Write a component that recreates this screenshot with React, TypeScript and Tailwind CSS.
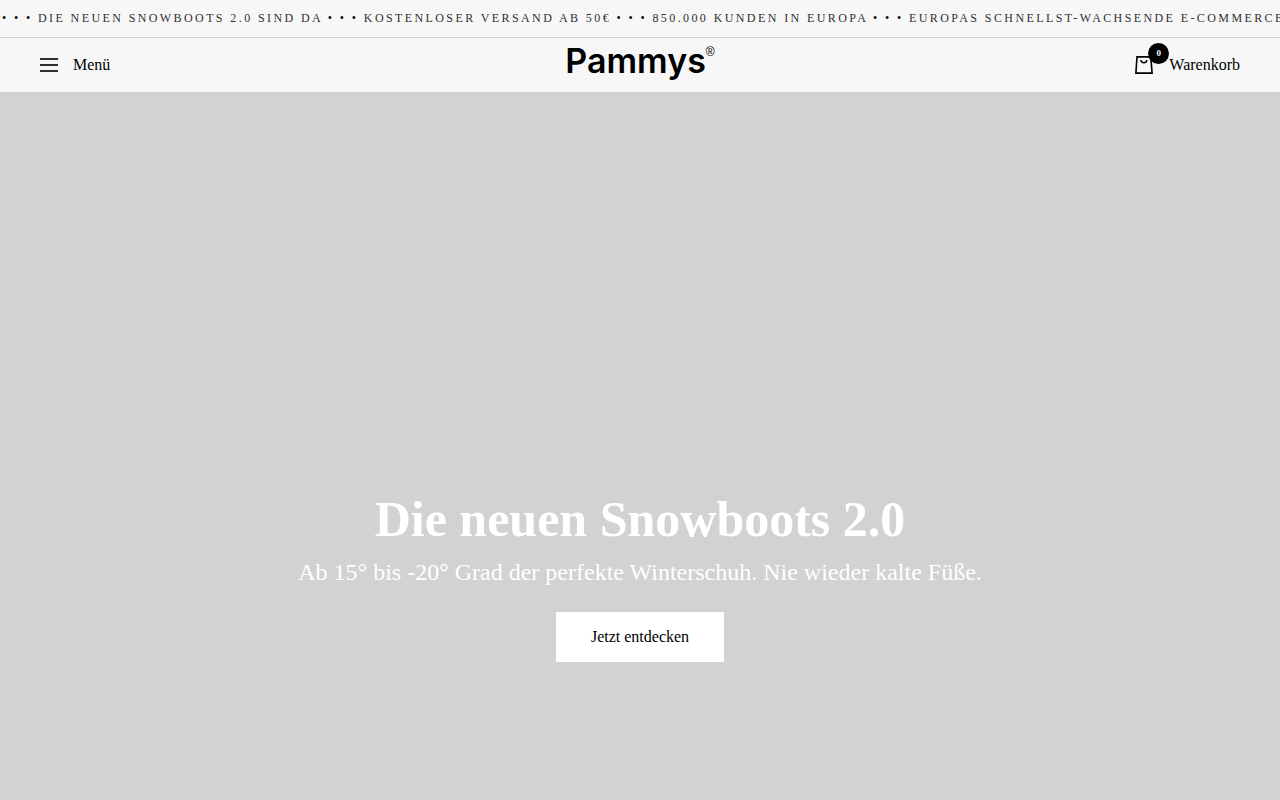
const announcements = [
  "DIE NEUEN SNOWBOOTS 2.0 SIND DA",
  "KOSTENLOSER VERSAND AB 50€",
  "850.000 KUNDEN IN EUROPA",
  "EUROPAS SCHNELLST-WACHSENDE E-COMMERCE BRAND",
];

function AnnouncementBar() {
  return (
    <div className="overflow-hidden border-b border-[#cfcfcf] pt-[9px] pb-[10px] pl-0.5">
      <p className="text-xs leading-[18px] tracking-[0.2em] whitespace-nowrap text-[#303030]">
        {announcements.map((text) => (
          <span key={text}>
            <span className="text-black">• • • </span>
            {text}{" "}
          </span>
        ))}
      </p>
    </div>
  );
}

function MenuIcon() {
  return (
    <svg width="18" height="14" viewBox="0 0 18 14" fill="none" aria-hidden="true">
      <path d="M0 1h18M0 7h18M0 13h18" stroke="#303030" strokeWidth="2" />
    </svg>
  );
}

function BagIcon() {
  return (
    <svg width="18" height="18" viewBox="0 0 18 18" fill="none" aria-hidden="true">
      <path d="M2 .9h13.8l1.3 16.2H.9L2 .9Z" stroke="#000" strokeWidth="1.6" />
      <path d="M5.8 4.2c.3 1.6 1.5 2.5 3.1 2.5s2.8-.9 3.1-2.5" stroke="#000" strokeWidth="1.6" />
    </svg>
  );
}

function Header() {
  return (
    <header className="grid h-[54px] grid-cols-[1fr_auto_1fr] items-center px-10">
      <button type="button" className="flex items-center gap-[15px] justify-self-start">
        <MenuIcon />
        <span>Menü</span>
      </button>
      <a
        href="/"
        aria-label="Pammys"
        className="flex items-start pb-2 font-['Inter',sans-serif] text-[34px] leading-[46px] font-semibold"
      >
        <span>Pammys</span>
        <span className="font-['Liberation_Sans',sans-serif] text-xs leading-7 font-normal">®</span>
      </a>
      <a href="/cart" className="flex items-center gap-4 justify-self-end">
        <span className="relative">
          <BagIcon />
          <span className="absolute -top-[13px] left-[13px] flex size-[21px] items-center justify-center rounded-full bg-black text-[9px] font-bold text-white">
            0
          </span>
        </span>
        <span>Warenkorb</span>
      </a>
    </header>
  );
}

export default function App() {
  return (
    <div className="flex min-h-screen flex-col bg-[#f7f7f7] font-['Liberation_Serif',serif] text-base text-black">
      <AnnouncementBar />
      <Header />
      <main className="flex flex-1 flex-col">
        <section className="flex flex-1 flex-col items-center justify-end bg-[#d2d2d2] px-10 pt-20 pb-[138px] text-center text-white">
          <h1 className="text-[50px] leading-[58px] font-bold">Die neuen Snowboots 2.0</h1>
          <p className="mt-2 text-2xl leading-8">
            Ab 15° bis -20° Grad der perfekte Winterschuh. Nie wieder kalte Füße.
          </p>
          <a href="/snowboots" className="mt-6 bg-white px-[35px] leading-[50px] text-black">
            Jetzt entdecken
          </a>
        </section>
      </main>
    </div>
  );
}
